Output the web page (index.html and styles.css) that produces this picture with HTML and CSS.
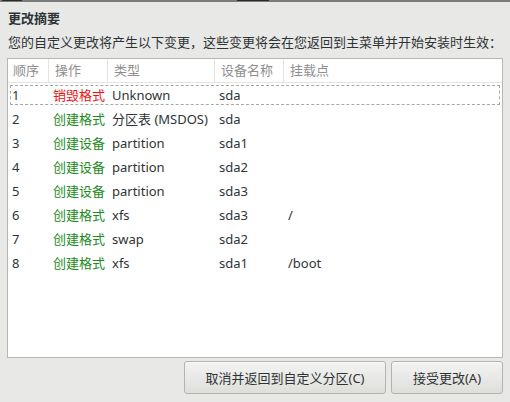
FILE: index.html
```html
<!DOCTYPE html>
<html lang="zh-CN">
<head>
<meta charset="utf-8">
<link rel="stylesheet" href="styles.css">
</head>
<body>
<div class="topstrip"><span class="cut a"></span><span class="cut b"></span></div>
<div class="dialog">
  <h1 class="title">更改摘要</h1>
  <p class="desc">您的自定义更改将产生以下变更，这些变更将会在您返回到主菜单并开始安装时生效：</p>
  <div class="table">
    <div class="row head">
      <div class="c">顺序</div><div class="c">操作</div><div class="c">类型</div><div class="c">设备名称</div><div class="c last">挂载点</div>
    </div>
    <div class="row focus"><div class="c">1</div><div class="c red">销毁格式</div><div class="c">Unknown</div><div class="c">sda</div><div class="c"></div></div>
    <div class="row"><div class="c">2</div><div class="c green">创建格式</div><div class="c">分区表 (MSDOS)</div><div class="c">sda</div><div class="c"></div></div>
    <div class="row"><div class="c">3</div><div class="c green">创建设备</div><div class="c">partition</div><div class="c">sda1</div><div class="c"></div></div>
    <div class="row"><div class="c">4</div><div class="c green">创建设备</div><div class="c">partition</div><div class="c">sda2</div><div class="c"></div></div>
    <div class="row"><div class="c">5</div><div class="c green">创建设备</div><div class="c">partition</div><div class="c">sda3</div><div class="c"></div></div>
    <div class="row"><div class="c">6</div><div class="c green">创建格式</div><div class="c">xfs</div><div class="c">sda3</div><div class="c">/</div></div>
    <div class="row"><div class="c">7</div><div class="c green">创建格式</div><div class="c">swap</div><div class="c">sda2</div><div class="c"></div></div>
    <div class="row"><div class="c">8</div><div class="c green">创建格式</div><div class="c">xfs</div><div class="c">sda1</div><div class="c">/boot</div></div>
  </div>
  <div class="buttons">
    <button class="btn cancel">取消并返回到自定义分区(C)</button>
    <button class="btn accept">接受更改(A)</button>
  </div>
</div>
</body>
</html>
```
FILE: styles.css
```css
* { box-sizing: border-box; }
html, body {
  margin: 0;
  padding: 0;
  width: 510px;
  height: 402px;
  overflow: hidden;
  background: #e8e8e7;
  font-family: "Noto Sans", "Noto Sans CJK SC", sans-serif;
  font-size: 13px;
  color: #2e3436;
}
.topstrip {
  height: 2px;
  background: #7b7b7b;
  position: relative;
}
.cut { position: absolute; top: 0; height: 1px; background: #2a2a2a; }
.cut.a { left: 2px; width: 20px; }
.cut.b { left: 237px; width: 32px; }
.dialog {
  padding: 0 7px 0 7px;
}
.title {
  margin: 0;
  padding: 6px 0 0 1px;
  height: 31px;
  font-size: 13px;
  font-weight: bold;
  line-height: 20px;
  color: #2e3436;
}
.desc {
  margin: 0;
  padding-left: 1px;
  height: 25px;
  line-height: 18px;
  color: #2e3436;
}
.table {
  background: #fff;
  border: 1px solid #b6b6b3;
  height: 300px;
}
.row {
  display: grid;
  grid-template-columns: 41px 59px 107px 69px 1fr;
  height: 24px;
  line-height: 24px;
}
.row .c {
  padding-left: 4px;
  white-space: nowrap;
  overflow: hidden;
}
.row.head {
  height: 24px;
  line-height: 23px;
  border-bottom: 1px solid #e3e3e3;
  color: #8f8f8f;
}
.row.head .c {
  padding-left: 6px;
  border-right: 1px solid #e3e3e3;
}
.row.head .c:first-child { padding-left: 5px; }
.row.head .c.last { border-right: none; }
.row.focus {
  outline: 1px dashed #a8a8a8;
  outline-offset: -3px;
}
.red { color: #f01010; }
.green { color: #1a8a1a; }
.buttons {
  display: flex;
  justify-content: flex-end;
  gap: 5px;
  padding-top: 3px;
}
.btn {
  height: 33px;
  font-family: inherit;
  font-size: 13px;
  color: #2e3436;
  border: 1px solid #b3b3b0;
  border-radius: 3px;
  background: linear-gradient(#f3f3f2, #dededb);
  box-shadow: inset 0 1px #fafafa;
}
.cancel { width: 202px; }
.accept { width: 112px; }
```
